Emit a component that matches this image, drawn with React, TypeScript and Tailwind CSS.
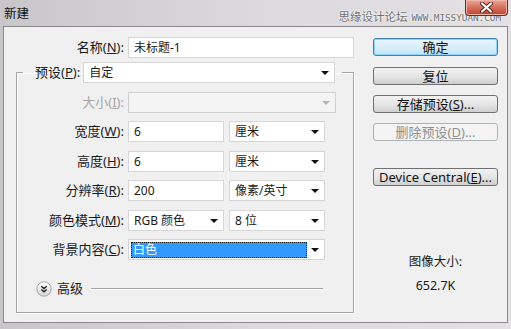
const font = "font-['Noto_Sans','Noto_Sans_CJK_SC',sans-serif]";

function Arrow({ disabled = false }: { disabled?: boolean }) {
  return (
    <svg width="8" height="4" viewBox="0 0 8 4" className="shrink-0">
      <path d="M0 0h8L4 4z" fill={disabled ? "#b4b4b4" : "#111"} />
    </svg>
  );
}

function Label({ children, w, disabled = false }: { children: React.ReactNode; w: string; disabled?: boolean }) {
  return (
    <div className={`${w} shrink-0 text-right pr-[4px] text-[13px] ${disabled ? "text-[#a5a5a5]" : "text-[#1a1a1a]"}`}>
      {children}
    </div>
  );
}

function Input({ value, w }: { value: string; w: string }) {
  return (
    <div className={`${w} h-[21px] bg-white border border-[#d6d6d6] flex items-center px-[5px]`}>{value}</div>
  );
}

function Select({ value, w, disabled = false }: { value: string; w: string; disabled?: boolean }) {
  return (
    <div
      className={`${w} h-[21px] border flex items-center pl-[5px] pr-[5px] ${
        disabled ? "bg-[#f4f4f4] border-[#d0d0d0]" : "bg-white border-[#d6d6d6]"
      }`}
    >
      <span className="flex-1">{value}</span>
      <Arrow disabled={disabled} />
    </div>
  );
}

function Row({ label, children, className = "" }: { label: React.ReactNode; children: React.ReactNode; className?: string }) {
  return (
    <div className={`flex items-center ${className}`}>
      <Label w="w-[105px]">{label}</Label>
      <div className="flex gap-[5px]">{children}</div>
    </div>
  );
}

function Button({
  children,
  primary = false,
  disabled = false,
  className = "",
}: {
  children: React.ReactNode;
  primary?: boolean;
  disabled?: boolean;
  className?: string;
}) {
  let style = "border-[#707070] bg-linear-to-b from-[#f2f2f2] via-[#e6e6e6] to-[#cfcfcf] text-[#111]";
  if (primary)
    style =
      "border-[#3c7fb1] bg-linear-to-b from-[#eaf6fd] via-[#d9eefa] to-[#bee6fd] text-[#111] shadow-[inset_0_0_0_1px_#8fd6f9]";
  if (disabled) style = "border-[#adb2b5] bg-[#f4f4f4] text-[#8f8f8f]";
  return (
    <div
      className={`h-[18px] w-full rounded-[3px] border flex items-center justify-center leading-none text-[13px] ${style} ${className}`}
    >
      {children}
    </div>
  );
}

function AdvancedIcon() {
  return (
    <svg width="16" height="16" viewBox="0 0 16 16">
      <defs>
        <linearGradient id="adv" x1="0" y1="0" x2="0" y2="1">
          <stop offset="0" stopColor="#ffffff" />
          <stop offset="1" stopColor="#d4d4d4" />
        </linearGradient>
      </defs>
      <circle cx="8" cy="8" r="7.2" fill="url(#adv)" stroke="#9c9c9c" strokeWidth="0.9" />
      <path d="M5.3 5.2L8 7.6l2.7-2.4M5.3 8.4L8 10.8l2.7-2.4" fill="none" stroke="#222" strokeWidth="1.4" />
    </svg>
  );
}

export default function App() {
  return (
    <div
      className={`${font} text-[12px] w-[511px] h-[329px] overflow-hidden flex flex-col bg-linear-to-r from-[#c9c6c9] via-[#dcd9dc] to-[#e4e1e4] text-[#1a1a1a]`}
    >
      <div className="relative h-[26px] shrink-0 flex items-start">
        <div className="ml-[4px] mt-[5px] text-[12.5px] text-[#111]">新建</div>
        <div className="ml-auto mr-[10px] mt-[8px] flex items-center gap-[4px] text-[#6e6e6e] [text-shadow:0_0_2px_#fff,0_0_2px_#fff]">
          <span className="text-[11.5px]">思缘设计论坛</span>
          <span className="text-[9.3px] font-['DejaVu_Sans_Mono',monospace] mt-[2px]">WWW.MISSYUAN.COM</span>
        </div>
        <div className="absolute right-[3px] top-0 w-[43px] h-[16px] rounded-b-[4px] border border-t-0 border-[#6b2a22] bg-linear-to-b from-[#e8a597] via-[#d5705f] to-[#c2402c] flex items-center justify-center shadow-[inset_0_0_0_1px_#f0b5a8]">
          <svg width="13" height="11" viewBox="0 0 13 11">
            <path d="M2 1.5l9 8M11 1.5l-9 8" stroke="#5a1d16" strokeWidth="4" strokeLinecap="round" />
            <path d="M2 1.5l9 8M11 1.5l-9 8" stroke="#fff" strokeWidth="2.2" strokeLinecap="round" />
          </svg>
        </div>
      </div>

      <div className="mx-[3px] h-[297px] shrink-0 border border-[#8a8a8a] bg-[#f0f0f0] flex">
        {/* left column */}
        <div className="w-[360px] pt-[10px] flex flex-col">
          <div className="flex items-center">
            <Label w="w-[124px]">
              名称(<u>N</u>):
            </Label>
            <Input value="未标题-1" w="w-[226px]" />
          </div>

          <fieldset className="ml-[12px] mt-[4px] w-[338px] h-[251px] border border-[#a5a5a5] shadow-[inset_1px_1px_0_#fff,1px_1px_0_#fff] pl-[6px] pt-[9px]">
            <legend className="pl-[12px] pr-[7px]">
              <div className="flex items-center">
                <span className="pr-[3px] text-[13px]">
                  预设(<u>P</u>):
                </span>
                <Select value="自定" w="w-[252px]" />
              </div>
            </legend>

            <div className="flex items-center">
              <Label w="w-[105px]" disabled>
                大小(<u>I</u>):
              </Label>
              <Select value="" w="w-[208px]" disabled />
            </div>
            <Row label={<>宽度(<u>W</u>):</>} className="mt-[8px]">
              <Input value="6" w="w-[96px]" />
              <Select value="厘米" w="w-[96px]" />
            </Row>
            <Row label={<>高度(<u>H</u>):</>} className="mt-[9px]">
              <Input value="6" w="w-[96px]" />
              <Select value="厘米" w="w-[96px]" />
            </Row>
            <Row label={<>分辨率(<u>R</u>):</>} className="mt-[8px]">
              <Input value="200" w="w-[96px]" />
              <Select value="像素/英寸" w="w-[96px]" />
            </Row>
            <Row label={<>颜色模式(<u>M</u>):</>} className="mt-[9px]">
              <Select value="RGB 颜色" w="w-[96px]" />
              <Select value="8 位" w="w-[96px]" />
            </Row>
            <div className="flex items-center mt-[8px]">
              <Label w="w-[105px]">
                背景内容(<u>C</u>):
              </Label>
              <div className="w-[197px] h-[21px] bg-white border border-[#d6d6d6] flex items-center pl-[2px] pr-[5px]">
                <div className="w-[176px] h-[16px] bg-[#3399ff] outline-1 outline-dotted outline-[#1a1a1a] -outline-offset-1 text-white flex items-center px-[2px]">
                  白色
                </div>
                <span className="flex-1" />
                <Arrow />
              </div>
            </div>

            <div className="flex items-center mt-[19px] pl-[13px]">
              <AdvancedIcon />
              <span className="ml-[5px] text-[13px]">高级</span>
              <div className="ml-[8px] w-[232px] border-t border-b border-t-[#a5a5a5] border-b-white" />
            </div>
          </fieldset>
        </div>

        {/* right column */}
        <div className="ml-auto mr-[9px] w-[125px] pt-[11px] flex flex-col">
          <Button primary>确定</Button>
          <Button className="mt-[11px]">复位</Button>
          <Button className="mt-[10px]">
            存储预设(<u>S</u>)...
          </Button>
          <Button className="mt-[10px]" disabled>
            删除预设(<u>D</u>)...
          </Button>
          <Button className="mt-[27px] text-[12px]">
            Device Central(<u>E</u>)...
          </Button>
          <div className="mt-[67px] text-center text-[12.5px]">图像大小:</div>
          <div className="mt-[5px] text-center text-[12.5px]">652.7K</div>
        </div>
      </div>
    </div>
  );
}
